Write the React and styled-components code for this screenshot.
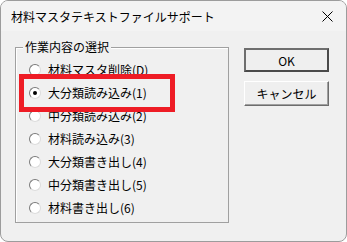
import React from "react";
import styled, { createGlobalStyle } from "styled-components";

const Global = createGlobalStyle`
  html, body { margin: 0; padding: 0; background: #ffffff; }
  body { font-family: "Noto Sans CJK JP", "Noto Sans", sans-serif; }
`;

const Window = styled.div`
  position: relative;
  width: 345px;
  height: 240px;
  border: 1px solid #9c9c9c;
  border-radius: 8px;
  background: #f0f0f0;
  overflow: hidden;
  display: flex;
  flex-direction: column;
`;

const TitleBar = styled.div`
  height: 30px;
  flex: none;
  display: flex;
  align-items: center;
  justify-content: space-between;
  padding: 0 13px 0 10px;
  background: #f3f3f3;
  font-size: 12px;
  color: #000;
`;

const Body = styled.div`
  flex: 1;
  display: flex;
  align-items: flex-start;
  padding: 9px 0 0 14px;
  position: relative;
`;

const Group = styled.div`
  position: relative;
  margin-top: 7px;
  width: 214px;
  height: 176px;
  border: 1px solid #a0a0a0;
  box-shadow: inset 1px 1px 0 #ffffff;
  padding: 10px 0 0 13px;
  box-sizing: border-box;
`;

const Legend = styled.div`
  position: absolute;
  top: -9px;
  left: 7px;
  padding: 0 2px;
  background: #f0f0f0;
  font-size: 12px;
  line-height: 16px;
  color: #000;
`;

const List = styled.div`
  display: flex;
  flex-direction: column;
`;

const Row = styled.label`
  height: 23px;
  display: flex;
  align-items: center;
  gap: 7px;
  font-size: 12px;
  color: #000;
`;

const Circle = styled.span`
  width: 12px;
  height: 12px;
  box-sizing: border-box;
  border-radius: 50%;
  border: 1px solid;
  border-color: #7a7a7a #dcdcdc #dcdcdc #7a7a7a;
  background: #ffffff;
  display: flex;
  align-items: center;
  justify-content: center;
  flex: none;
  &::after {
    content: "";
    width: 4px;
    height: 4px;
    border-radius: 50%;
    background: ${(p) => (p.$checked ? "#000" : "transparent")};
  }
`;

const Buttons = styled.div`
  margin-left: 15px;
  margin-top: 8px;
  display: flex;
  flex-direction: column;
  gap: 9px;
`;

const Button = styled.button`
  width: 85px;
  height: ${(p) => (p.$default ? "24px" : "25px")};
  box-sizing: border-box;
  font-family: "Noto Sans CJK JP", "Noto Sans", sans-serif;
  font-size: 12px;
  color: #000;
  background: #efefef;
  padding: 0;
  border: ${(p) => (p.$default ? "2px" : "1px")} solid;
  border-color: ${(p) =>
    p.$default ? "#6e6e6e #4a4a4a #4a4a4a #6e6e6e" : "#ffffff #6d6d6d #6d6d6d #ffffff"};
  box-shadow: ${(p) => (p.$default ? "none" : "inset -1px -1px 0 #a0a0a0")};
`;

const Highlight = styled.div`
  position: absolute;
  left: 18px;
  top: 43px;
  width: 156px;
  height: 38px;
  box-sizing: border-box;
  border: 5px solid #ee1c25;
  pointer-events: none;
`;

const items = [
  "材料マスタ削除(D)",
  "大分類読み込み(1)",
  "中分類読み込み(2)",
  "材料読み込み(3)",
  "大分類書き出し(4)",
  "中分類書き出し(5)",
  "材料書き出し(6)",
];

export default function App() {
  return (
    <>
      <Global />
      <Window>
        <TitleBar>
          <span>材料マスタテキストファイルサポート</span>
          <svg width="11" height="11" viewBox="0 0 11 11">
            <path d="M0.5 0.5 L10.5 10.5 M10.5 0.5 L0.5 10.5" stroke="#000" strokeWidth="1" />
          </svg>
        </TitleBar>
        <Body>
          <Group>
            <Legend>作業内容の選択</Legend>
            <List>
              {items.map((t, i) => (
                <Row key={t}>
                  <Circle $checked={i === 1} />
                  <span>{t}</span>
                </Row>
              ))}
            </List>
          </Group>
          <Buttons>
            <Button $default>OK</Button>
            <Button>キャンセル</Button>
          </Buttons>
          <Highlight />
        </Body>
      </Window>
    </>
  );
}
